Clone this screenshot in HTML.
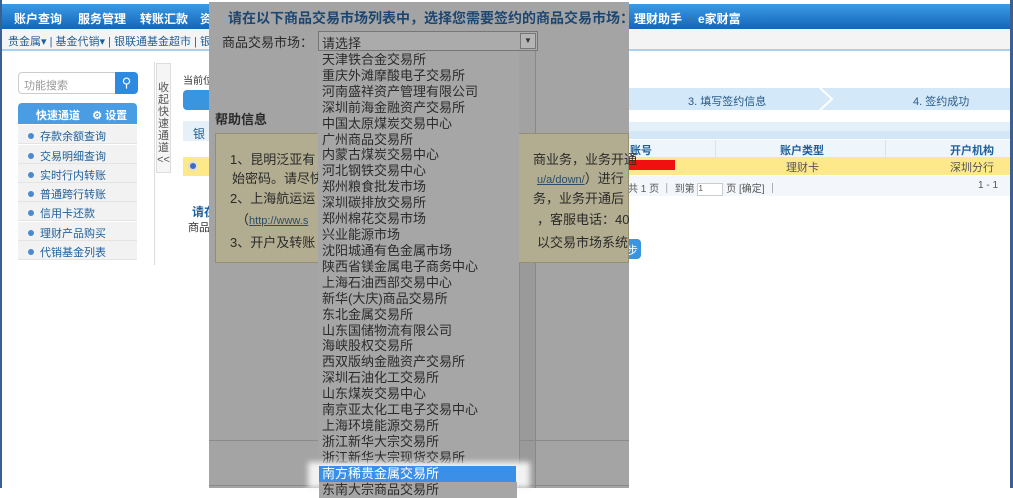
<!DOCTYPE html>
<html><head><meta charset="utf-8"><style>
*{margin:0;padding:0;box-sizing:border-box}
body{width:1013px;height:488px;position:relative;overflow:hidden;background:#fff;font-family:"Liberation Sans","Noto Sans CJK SC",sans-serif;font-size:12px;color:#333}
.a{position:absolute;white-space:nowrap}
.nav{left:2px;top:4px;width:1008px;height:25px;background:linear-gradient(#3a9be6,#1565b8);}
.nav span{color:#fff;font-weight:bold;font-size:12px;position:absolute;top:6px}
.sub{left:2px;top:29px;width:1008px;height:22px;background:#f4f4f4;border-bottom:2px solid #a9d0ee}
.sub span{color:#1f5f9a;position:absolute;top:4px;font-size:11px}
.qi{left:18px;width:119px;height:19px;background:#f2f2f2;border-bottom:1px solid #e3e3e3;color:#1f5f9a;font-size:11px;padding:3px 0 0 10px}
.qi:before{content:"";display:inline-block;width:6px;height:6px;border-radius:50%;background:#4a8ad0;margin-right:6px;vertical-align:1px}
.ov{left:209px;top:2px;width:420px;height:486px;background:#a4a4a4}
.li{left:319px;width:198px;height:16px;font-size:13px;line-height:16px;color:#2b2b2b;padding-left:3px}
.help{color:#2a2a2a;font-size:13px}
</style></head><body>
<div class="a" style="left:0;top:0;width:2px;height:488px;background:#3b5f8e"></div>
<div class="a" style="left:1010px;top:0;width:3px;height:488px;background:#3b5f8e"></div>
<div class="a nav"><span style="left:12px">账户查询</span><span style="left:76px">服务管理</span><span style="left:138px">转账汇款</span><span style="left:198px">资</span><span style="left:632px">理财助手</span><span style="left:696px">e家财富</span></div>
<div class="a sub"><span style="left:6px">贵金属▾ | 基金代销▾ | 银联通基金超市 | 银证业</span></div>
<!-- left panel -->
<div class="a" style="left:18px;top:72px;width:98px;height:22px;border:1px solid #ccc;border-radius:4px 0 0 4px;color:#999;font-size:11px;padding:4px 5px">功能搜索</div>
<div class="a" style="left:115px;top:72px;width:23px;height:22px;background:#2d8ae0;border-radius:0 4px 4px 0;color:#fff;font-size:13px;text-align:center;line-height:22px">⚲</div>
<div class="a" style="left:18px;top:103px;width:119px;height:21px;background:#4a9de2;border-radius:4px 4px 0 0;color:#fff;font-weight:bold;font-size:11px;padding:4px 0 0 18px">快速通道 &nbsp;&nbsp;&nbsp;⚙ 设置</div>
<div class="a qi" style="top:125px">存款余额查询</div>
<div class="a qi" style="top:145px">交易明细查询</div>
<div class="a qi" style="top:164px">实时行内转账</div>
<div class="a qi" style="top:183px">普通跨行转账</div>
<div class="a qi" style="top:202px">信用卡还款</div>
<div class="a qi" style="top:222px">理财产品购买</div>
<div class="a qi" style="top:241px">代销基金列表</div>
<div class="a" style="left:154px;top:62px;width:1px;height:203px;background:#ddd"></div>
<div class="a" style="left:156px;top:63px;width:15px;height:110px;border:1px solid #ddd;background:#f5f5f5;font-size:11px;line-height:12px;color:#555;white-space:normal;text-align:center;padding-top:18px">收起快速通道&lt;&lt;</div>
<div class="a" style="left:183px;top:72px;font-size:10px">当前位</div>
<div class="a" style="left:183px;top:90px;width:30px;height:20px;background:#3a95e0;border-radius:4px 0 0 4px"></div>
<div class="a" style="left:183px;top:121px;width:30px;height:20px;background:#e6f0f8;color:#1f5f9a;padding:4px 0 0 10px">银</div>
<div class="a" style="left:183px;top:157px;width:30px;height:19px;background:#fde98a"></div>
<div class="a" style="left:188px;top:161px;width:10px;height:10px;border-radius:50%;background:#3c6cc0;border:2px solid #ddd"></div>
<div class="a" style="left:192px;top:203px;font-weight:bold;color:#1f5f9a">请在</div>
<div class="a" style="left:188px;top:219px;font-size:11px">商品</div>
<!-- right -->
<div class="a" style="left:628px;top:88px;width:382px;height:22px;background:#d3e8f8"></div>
<div class="a" style="left:688px;top:93px;color:#2a5a88;font-size:11px">3. 填写签约信息</div>
<div class="a" style="left:913px;top:93px;color:#2a5a88;font-size:11px">4. 签约成功</div>
<svg class="a" style="left:818px;top:88px" width="16" height="22"><path d="M2 0 L14 11 L2 22" stroke="#fff" stroke-width="2" fill="none"/></svg>
<div class="a" style="left:628px;top:122px;width:382px;height:9px;background:#e3f0fa"></div>
<div class="a" style="left:628px;top:131px;width:382px;height:8px;background:#d4e7f6"></div>
<div class="a" style="left:628px;top:140px;width:382px;height:17px;background:#eef5fb;font-weight:bold;color:#1f5f9a;font-size:11px"><span class="a" style="left:2px;top:2px">账号</span><span class="a" style="left:152px;top:2px">账户类型</span><span class="a" style="left:322px;top:2px">开户机构</span></div>
<div class="a" style="left:715px;top:140px;width:1px;height:35px;background:#d8e3ee"></div>
<div class="a" style="left:885px;top:140px;width:1px;height:35px;background:#d8e3ee"></div>
<div class="a" style="left:628px;top:157px;width:382px;height:18px;background:#fde98a;font-size:11px;color:#555"><span class="a" style="left:158px;top:2px">理财卡</span><span class="a" style="left:322px;top:2px">深圳分行</span></div>
<div class="a" style="left:628px;top:160px;width:47px;height:10px;background:#f01010"></div>
<div class="a" style="left:628px;top:176px;width:382px;height:20px;background:#f3f7fb;font-size:10px;color:#555"><span class="a" style="left:0;top:4px">共 1 页 ｜ 到第 <span style="display:inline-block;width:26px;height:13px;border:1px solid #ccc;background:#fff;vertical-align:middle;font-size:8px">1</span> 页 [确定] ｜</span><span class="a" style="left:350px;top:4px">1 - 1</span></div>
<div class="a" style="left:622px;top:239px;width:19px;height:20px;background:#3a95e0;border-radius:4px;color:#fff;font-size:11px;padding:3px 0 0 5px">步</div>
<!-- overlay -->
<div class="a ov"></div>
<div class="a" style="left:228px;top:8px;font-weight:bold;font-size:14px;color:#1d4670">请在以下商品交易市场列表中，选择您需要签约的商品交易市场：</div>
<div class="a" style="left:222px;top:32px;font-size:13px;color:#2a2a2a">商品交易市场：</div>
<div class="a" style="left:318px;top:31px;width:220px;height:20px;background:#ababab;border:1px solid #777;font-size:13px;padding:1px 0 0 3px;color:#2a2a2a">请选择</div>
<div class="a" style="left:520px;top:33px;width:16px;height:16px;background:#b5b5b5;border:1px solid #777;font-size:8px;text-align:center;line-height:14px">▼</div>
<div class="a" style="left:318px;top:51px;width:218px;height:437px;background:#a6a6a6;border-left:1px solid #888;border-right:1px solid #888"></div>
<div class="a" style="left:519px;top:51px;width:16px;height:437px;background:#a2a2a2"></div>
<div class="a" style="left:519px;top:172px;width:16px;height:316px;background:#9a9a9a;border-left:1px solid #8a8a8a"></div>
<div class="a" style="left:215px;top:109px;font-weight:bold;font-size:13px;color:#2a2a2a">帮助信息</div>
<div class="a" style="left:215px;top:133px;width:414px;height:130px;background:#b2ad90;border:1px solid #958f6f"></div>
<div class="a help" style="left:230px;top:149px">1、昆明泛亚有</div>
<div class="a help" style="left:232px;top:168px">始密码。请尽快</div>
<div class="a help" style="left:230px;top:188px">2、上海航运运</div>
<div class="a help" style="left:236px;top:209px">（<u style="color:#2b4e6a;font-size:11px">http://www.s</u></div>
<div class="a help" style="left:230px;top:232px">3、开户及转账</div>
<div class="a help" style="left:533px;top:149px">商业务，业务开通</div>
<div class="a help" style="left:537px;top:168px"><u style="color:#2b4e6a;font-size:11px">u/a/down/</u>）进行</div>
<div class="a help" style="left:533px;top:188px">务，业务开通后</div>
<div class="a help" style="left:537px;top:209px">，客服电话：40</div>
<div class="a help" style="left:537px;top:232px">以交易市场系统</div>
<div class="a" style="left:209px;top:440px;width:420px;height:1px;background:#8a8a8a"></div>
<div class="a" style="left:209px;top:485px;width:420px;height:1px;background:#8a8a8a"></div>
<div class="a" style="left:318px;top:51px;width:201px;height:437px;background:#a6a6a6"></div>
<div class="a li" style="top:52px">天津铁合金交易所</div>
<div class="a li" style="top:68px">重庆外滩摩酸电子交易所</div>
<div class="a li" style="top:84px">河南盛祥资产管理有限公司</div>
<div class="a li" style="top:100px">深圳前海金融资产交易所</div>
<div class="a li" style="top:116px">中国太原煤炭交易中心</div>
<div class="a li" style="top:132px">广州商品交易所</div>
<div class="a li" style="top:147px">内蒙古煤炭交易中心</div>
<div class="a li" style="top:163px">河北钢铁交易中心</div>
<div class="a li" style="top:179px">郑州粮食批发市场</div>
<div class="a li" style="top:195px">深圳碳排放交易所</div>
<div class="a li" style="top:211px">郑州棉花交易市场</div>
<div class="a li" style="top:227px">兴业能源市场</div>
<div class="a li" style="top:243px">沈阳城通有色金属市场</div>
<div class="a li" style="top:259px">陕西省镁金属电子商务中心</div>
<div class="a li" style="top:275px">上海石油西部交易中心</div>
<div class="a li" style="top:291px">新华(大庆)商品交易所</div>
<div class="a li" style="top:307px">东北金属交易所</div>
<div class="a li" style="top:323px">山东国储物流有限公司</div>
<div class="a li" style="top:338px">海峡股权交易所</div>
<div class="a li" style="top:354px">西双版纳金融资产交易所</div>
<div class="a li" style="top:370px">深圳石油化工交易所</div>
<div class="a li" style="top:386px">山东煤炭交易中心</div>
<div class="a li" style="top:402px">南京亚太化工电子交易中心</div>
<div class="a li" style="top:418px">上海环境能源交易所</div>
<div class="a li" style="top:434px">浙江新华大宗交易所</div>
<div class="a li" style="top:450px">浙江新华大宗现货交易所</div>
<div class="a" style="left:308px;top:462px;width:222px;height:26px;background:#f2f2f2;filter:blur(3px)"></div>
<div class="a li" style="top:466px;background:#3b8fe6;color:#fff;width:197px">南方稀贵金属交易所</div>
<div class="a li" style="top:482px;background:#a6a6a6">东南大宗商品交易所</div>
</body></html>
